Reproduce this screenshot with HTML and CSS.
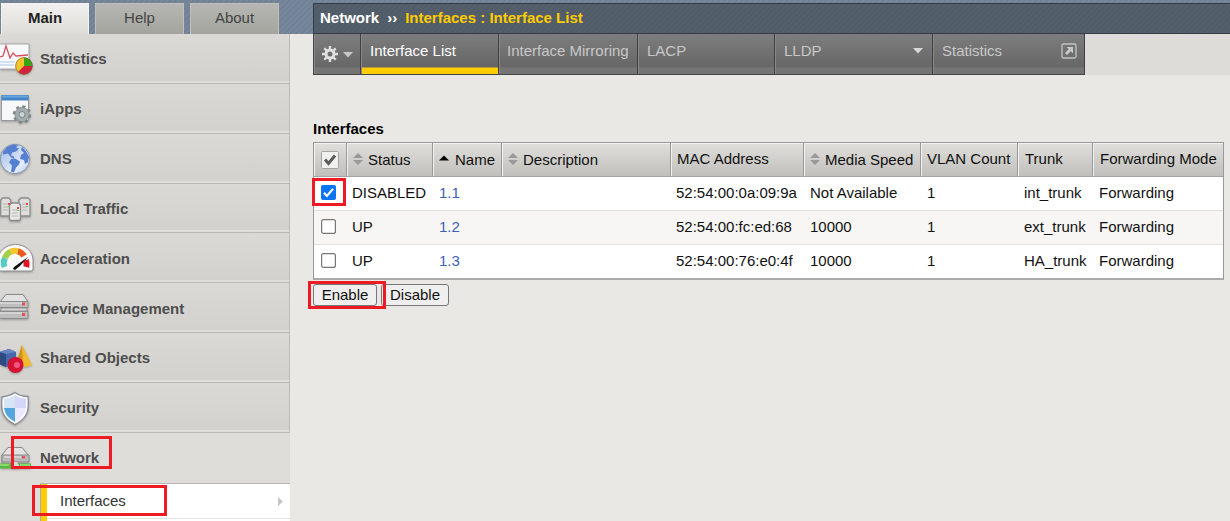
FILE: index.html
```html
<!DOCTYPE html>
<html lang="en">
<head>
<meta charset="utf-8">
<title>Interface List</title>
<link rel="stylesheet" href="styles.css">
</head>
<body>
<div class="app">
  <aside class="side">
    <nav class="tabs"><a class="tab on">Main</a><a class="tab">Help</a><a class="tab">About</a></nav>
    <ul class="menu">
      <li class="item">
        <svg class="icon" viewBox="0 0 34 36"><path d="M-2 3h31v25H-2z" fill="#f8f9fb" stroke="#a8a8a8"/><path d="M0 16l3-1 3-10 4 12 3-5 3 3 12-1" fill="none" stroke="#d5505c" stroke-width="1.3"/><path d="M0 21h15M0 24h14" stroke="#c5d9ec" stroke-width="1.5"/><circle cx="24" cy="25" r="8.5" fill="#d2233c"/><path d="M24 25v-8.5a8.500 8.500 0 0 1 8.500 8.500z" fill="#37a616"/><path d="M24 25v-8.500a8.500 8.500 0 0 0-6 14.500z" fill="#f2c62b"/><circle cx="24" cy="25" r="8.300" fill="none" stroke="#7a5a28" stroke-opacity=".5"/></svg>
        <span>Statistics</span></li>
      <li class="item">
        <svg class="icon" viewBox="0 0 34 36"><path d="M1.500 4.500h27v25h-27z" fill="#f8f8fa" stroke="#969a9e"/><path d="M1.500 4h27v5.500h-27z" fill="#4486c8"/><path d="M2 4.500h26v2H2z" fill="#6aa6dc"/><circle cx="22" cy="23.500" r="7.700" fill="none" stroke="#7c8688" stroke-width="3" stroke-dasharray="3 3.050"/><circle cx="22" cy="23.500" r="7.200" fill="#a3adaf" stroke="#7c8688" stroke-width=".7"/><circle cx="22" cy="23.500" r="3" fill="#cfd3d3" stroke="#7c8688"/></svg>
        <span>iApps</span></li>
      <li class="item">
        <svg class="icon" viewBox="0 0 34 36"><defs><linearGradient id="sea" x2="1" y2="1"><stop stop-color="#9bb9e8"/><stop offset=".7" stop-color="#e6edfb"/><stop offset="1" stop-color="#a4c0ee"/></linearGradient></defs><circle cx="15" cy="18" r="14.700" fill="url(#sea)" stroke="#8793a8"/><path d="M3 11l4-5 6-2.500 5 1-2 2 3 1-3 3-4 1-1 3 3 1v2l-3-1-3-4-5 1zM11 18l4-.5 5 3-1 3-3 3-2 5-3-1 1-6-3-3zM22 6l4 4 3 6-1 5-3 2-1-4-4-1 1-4 3-2-3-3z" fill="#557fd0"/></svg>
        <span>DNS</span></li>
      <li class="item">
        <svg class="icon low" viewBox="0 0 34 36"><g fill="#dededd" stroke="#8c8c8a" stroke-width="1.300"><path d="M.7 8l2-2h6l2 2v16H.7zM19 8l2-2h7l2 2v16H19z"/><path d="M9.500 13l2-2h7l2 2v14l-1 1.500h-9l-1-1.500z" fill="#e8e8e7"/></g><path d="M3 12h5m-5 3h5m-5 3h5M22 12h5m-5 3h5m-5 3h5m-15 0h6m-6 3h6m-6 3h6" stroke="#b4b4b3"/><path d="M8 11h2v2H8zM26 11h2v2h-2zM17 15h2v2h-2z" fill="#e94355"/><path d="M8 14h2v1H8zM26 14h2v1h-2zM17 18h2v1h-2z" fill="#72c95e"/></svg>
        <span>Local Traffic</span></li>
      <li class="item">
        <svg class="icon" viewBox="0 0 34 36"><path d="M-2 30V19a17.500 15.500 0 0 1 35 0v9q0 2-2 2z" fill="#fafafa" stroke="#8f8f8f"/><g fill="none" stroke-width="6"><path d="M4.500 26a11 11 0 0 1 .6-9" stroke="#53cdc5"/><path d="M5 17q2-5 6-6.500" stroke="#a4cf48"/><path d="M10.500 11q4-2 8-.5" stroke="#f2c62d"/><path d="M18 10.500q4 1 6 4.500" stroke="#e85b21"/><path d="M26 19q1 4 .3 7" stroke="#df1526"/></g><path d="M14 26l14-10-8 9-5 4-2-1z" fill="#111"/></svg>
        <span>Acceleration</span></li>
      <li class="item">
        <svg class="icon high" viewBox="0 0 34 36"><g stroke="#8b8b8b"><path d="M0 13l6-7.500h17l5 7.500z" fill="#e2e2e2"/><path d="M-2 12.500h30v6H-2zM-2 22.500h30v7H-2z" fill="#bebebe"/><path d="M0 22l2-3h24l2 3z" fill="#d8d8d8"/></g><path d="M0 14h22M0 24h22" stroke="#e7e7e7"/><path d="M22 13.500h3v3h-3zM22 24h3v3h-3z" fill="#ec4c5c"/></svg>
        <span>Device Management</span></li>
      <li class="item">
        <svg class="icon lowest" viewBox="0 0 34 36"><path d="M-1 9l10-3 7 3v13l-10 2-7-3z" fill="#4668ad"/><path d="M-1 9l10-3 7 3-10 2z" fill="#6685c2"/><path d="M-1 9l7 2v13l-7-3z" fill="#304b82"/><path d="M22 2l10 20-6 2-10-2z" fill="#f2ba2c"/><path d="M22 2l-6 20 7 1z" fill="#cd9220"/><circle cx="15.500" cy="22" r="8" fill="#d31234"/><circle cx="17" cy="22" r="3" fill="#f15582"/></svg>
        <span>Shared Objects</span></li>
      <li class="item">
        <svg class="icon low" viewBox="0 0 34 36"><path d="M15 1.500q5 4 13 4c1 12 1 21-13 28C1 27 1 18 2 6q8-1 13-4.500z" fill="#fff" stroke="#868b98" stroke-width="1.300"/><path d="M15 4q5 3.500 11 3.500V17H15z" fill="#d4d6fa"/><path d="M15 4Q10 7.500 4 7.500V17h11z" fill="#d5e5f5"/><path d="M4 17h11v14Q5 26 4 17z" fill="#55a6dc"/><path d="M26 17H15v14q10-5 11-14z" fill="#edeaff"/></svg>
        <span>Security</span></li>
      <li class="item open">
        <svg class="icon lower" viewBox="0 0 34 36"><path d="M2 13l6-7.500h14l6 7.500v8H2z" fill="#e2e2e2" stroke="#8b8b8b"/><path d="M2 13h27v7H2z" fill="#b9b9b9" stroke="#8b8b8b"/><path d="M4 15h17" stroke="#e9e9e9"/><path d="M22 14h3v2.500h-3z" fill="#ec4c5c"/><path d="M-1 21.500h32v5H-1z" fill="#54b841"/><path d="M0 23h9m11 0h10" stroke="#99e77d" stroke-width="1.500"/><path d="M11 23l2-3h4l2 3v4h-8z" fill="#dadada"/></svg>
        <span>Network</span></li>
    </ul>
    <div class="sub"><span>Interfaces</span><svg class="arrow" viewBox="0 0 5 9"><path d="M0 0l5 4.500L0 9z" fill="#c6c6c6"/></svg></div>
  </aside>
  <main class="main">
    <h1 class="crumb"><span>Network</span><span class="sep">››</span><span class="here">Interfaces : Interface List</span></h1>
    <div class="bar">
      <nav class="tools">
        <a class="tool gear"><svg width="16" height="16" viewBox="0 0 16 16"><circle cx="8" cy="8" r="4" fill="none" stroke="#e0e0e0" stroke-width="3"/><path d="M8 0v3m0 10v3M0 8h3m10 0h3M2.300 2.300l2.200 2.200m7 7l2.200 2.200M13.700 2.300l-2.200 2.200m-7 7l-2.200 2.200" stroke="#e0e0e0" stroke-width="2.400"/></svg><svg width="10" height="6" viewBox="0 0 10 6"><path d="M0 0h10L5 5.500z" fill="#c8c8c8"/></svg></a>
        <a class="tool list on">Interface List</a>
        <a class="tool mirroring">Interface Mirroring</a>
        <a class="tool lacp">LACP</a>
        <a class="tool lldp">LLDP<svg width="10" height="6" viewBox="0 0 10 6"><path d="M0 0h10L5 5.500z" fill="#d8d8d8"/></svg></a>
        <a class="tool stats">Statistics<svg width="16" height="16" viewBox="0 0 16 16"><rect x="1" y="1" width="14" height="14" rx="1.500" fill="none" stroke="#c4c4c4" stroke-width="1.300"/><path d="M5.500 4H12v6.500L9.800 8.300 6 12 4 10l3.700-3.800z" fill="#c8c8c8"/></svg></a>
      </nav>
    </div>
    <section class="content">
      <h2 class="title">Interfaces</h2>
      <table class="grid">
        <colgroup><col class="c1"><col class="c2"><col class="c3"><col class="c4"><col class="c5"><col class="c6"><col class="c7"><col class="c8"><col class="c9"></colgroup>
        <thead><tr>
          <th class="pick"><svg class="all" viewBox="0 0 18 18"><rect x=".5" y=".5" width="17" height="17" rx="1" fill="#f1f1f0" stroke="#a4a4a2"/><path d="M4 8.500l3.500 4L14 4.500" fill="none" stroke="#5c5c5c" stroke-width="3"/></svg></th>
          <th class="sort"><svg viewBox="0 0 10 12"><path d="M0 5l5-5 5 5zM0 7h10l-5 5z" fill="#999"/></svg>Status</th>
          <th class="sort"><svg viewBox="0 0 10 12"><path d="M0 7.500l5-5 5 5z" fill="#000"/></svg>Name</th>
          <th class="sort"><svg viewBox="0 0 10 12"><path d="M0 5l5-5 5 5zM0 7h10l-5 5z" fill="#999"/></svg>Description</th>
          <th>MAC Address</th>
          <th class="sort"><svg viewBox="0 0 10 12"><path d="M0 5l5-5 5 5zM0 7h10l-5 5z" fill="#999"/></svg>Media Speed</th>
          <th>VLAN Count</th><th class="far">Trunk</th><th class="far">Forwarding Mode</th>
        </tr></thead>
        <tbody>
          <tr><td class="pick"><svg class="box" viewBox="0 0 15 15"><rect width="15" height="15" rx="2" fill="#0b75f5"/><path d="M3 7.700l3 3.200 6-7" fill="none" stroke="#fff" stroke-width="2.200"/></svg><i class="mark mark-check"></i></td><td>DISABLED</td><td><a>1.1</a></td><td></td><td>52:54:00:0a:09:9a</td><td>Not Available</td><td>1</td><td>int_trunk</td><td>Forwarding</td></tr>
          <tr><td class="pick"><svg class="box" viewBox="0 0 15 15"><rect x=".6" y=".6" width="13.800" height="13.800" rx="2" fill="#fff" stroke="#767676" stroke-width="1.200"/></svg></td><td>UP</td><td><a>1.2</a></td><td></td><td>52:54:00:fc:ed:68</td><td>10000</td><td>1</td><td>ext_trunk</td><td>Forwarding</td></tr>
          <tr><td class="pick"><svg class="box" viewBox="0 0 15 15"><rect x=".6" y=".6" width="13.800" height="13.800" rx="2" fill="#fff" stroke="#767676" stroke-width="1.200"/></svg></td><td>UP</td><td><a>1.3</a></td><td></td><td>52:54:00:76:e0:4f</td><td>10000</td><td>1</td><td>HA_trunk</td><td>Forwarding</td></tr>
        </tbody>
      </table>
      <div class="actions"><button class="btn enable">Enable</button><button class="btn disable">Disable</button></div>
    </section>
  </main>
  <i class="mark mark-network"></i><i class="mark mark-interfaces"></i><i class="mark mark-enable"></i>
</div>
</body>
</html>
```
FILE: styles.css
```css
* { box-sizing: border-box; }
body { margin: 0; font: 15px/18px "Liberation Sans", Arial, sans-serif; color: #111; }
.app { position: relative; display: flex; width: 1230px; height: 521px; overflow: hidden;
  background: linear-gradient(#e9e8e4, #e9e8e4) 0 34px no-repeat, repeating-linear-gradient(135deg, #718196 0 2px, #77879b 2px 4px); }
.side { width: 290px; flex: none; height: 521px; display: flex; flex-direction: column; }
.tabs { display: flex; gap: 6px; height: 34px; padding: 3px 0 0 1px; flex: none; }
.tab { width: 89px; height: 31px; padding-top: 5px; text-align: center; color: #444;
  background: linear-gradient(#b6b7b2, #a3a49e); border: 1px solid #bfc0bb; border-bottom: 0; }
.tab.on { width: 88px; color: #222; font-weight: bold; background: linear-gradient(#f1f0ee, #dddcd8); border-color: #f3f2f0; }
.menu { list-style: none; margin: 0; padding: 0; flex: none; }
.item { height: 49.850px; padding-top: 2px; display: flex; align-items: center; gap: 6px; font-weight: bold; color: #4e4e4e;
  background: linear-gradient(#dad9d5, #d2d1cd); border-bottom: 1px solid #b9b9b6; border-right: 1px solid #bbbbb8;
  box-shadow: inset 0 -2px #dfdeda; }
.item.open { background: #dedddA; border-color: transparent; box-shadow: none; }
.icon { width: 34px; height: 36px; flex: none; filter: drop-shadow(0 1px 1px #0004); }
.low { margin: 1px 0 -1px; }
.lower { margin: 2px 0 -2px; }
.lowest { margin: 3px 0 -3px; }
.high { margin: -2px 0 2px; }
.sub { flex: 1; background: linear-gradient(#e4e4e2, #e4e4e2) 6px 34px / 243px 1px no-repeat, #fff;
  margin-left: 40px; border-top: 1px solid #b5b5b5; border-left: 1px solid #aaa; padding: 8px 7px 0 0;
  display: flex; justify-content: space-between; align-items: flex-start; box-shadow: -40px 0 #dedddA, inset 6px 0 #fc0; color: #333; }
.sub span { padding-left: 19px; }
.arrow { width: 5px; height: 9px; margin-top: 5px; }
.main { flex: 1; padding: 3px 0 0 23px; min-width: 0; }
.crumb { height: 31px; margin: 0; padding: 5px 0 0 6px; display: flex; font-size: 15px; line-height: 18px; color: #fff;
  border: 1px solid #353b46; border-right: 0; background: repeating-linear-gradient(135deg, #505c69 0 2px, #555f69 2px 4px); }
.sep { margin: 0 8px; }
.here { color: #fc0; }
.bar { height: 41px; background: #dddcd8; }
.tools { display: flex; width: 772px; height: 41px; border-left: 1px solid #444; }
.tool { height: 41px; padding: 8px 8px 0 9px; display: flex; justify-content: space-between; color: #c8c8c8; white-space: nowrap;
  background: linear-gradient(#7d7d7d, #676767 33px, #757575 34px); border-right: 1px solid #404040; border-bottom: 1px solid #444; box-shadow: inset 1px 0 #888; }
.tool svg { margin: 6px 1px 0 0; }
.gear { width: 47px; padding-left: 8px; }
.gear svg { margin: 4px 0 0; }
.gear svg + svg { margin: 10px -1px 0 0; }
.list { width: 138px; }
.mirroring { width: 139px; padding-left: 8px; }
.lacp { width: 137px; }
.lldp { width: 158px; }
.stats { width: 152px; }
.stats svg { margin: 1px -1px 0 0; }
.tool.on { color: #fff; background: linear-gradient(#7d7d7d, #656565 33px, #fc0 34px); }
.content { padding-top: 45px; background: #e9e8e4; height: 446px; }
.title { margin: 0 0 4px; font-size: 15px; line-height: 18px; color: #000; }
.grid { width: 911px; table-layout: fixed; border-collapse: separate; border-spacing: 0; border: 1px solid #999; border-bottom: 2px solid #aaa; }
.c1 { width: 33px; } .c2 { width: 86px; } .c3 { width: 69px; } .c4 { width: 169px; } .c5 { width: 133px; }
.c6 { width: 117px; } .c7 { width: 97px; } .c8 { width: 75px; } .c9 { width: 130px; }
.grid th { height: 34px; padding: 0 0 2px 6px; text-align: left; font-weight: normal; white-space: nowrap;
  background: linear-gradient(#e0dfdc, #c0bfbb); border-right: 1px solid #999; border-bottom: 1px solid #a5a5a5; box-shadow: inset 1px 1px #f2f2f0; }
.grid th.far { padding-left: 7px; }
.grid th:last-child, .grid td:last-child { border-right: 0; }
.grid th.sort { padding: 0 0 0 6px; }
.sort svg { width: 10px; height: 12px; margin-right: 5px; }
.grid th:nth-child(3) svg { margin-right: 6px; }
.grid td { height: 34px; padding: 0 0 1px 5px; white-space: nowrap; background: #fff; border-bottom: 1px solid #e1e1df; }
.grid td:nth-child(n+6) { padding-left: 6px; }
.grid tr:nth-child(2) td { background: #f7f6f4; }
.grid tbody tr:last-child td { height: 33px; border-bottom: 0; }
.grid td a { color: #3b62b8; padding-left: 1px; }
.grid .pick { position: relative; padding: 0 0 0 7px; }
.pick svg { display: block; width: 18px; height: 18px; }
.pick .box { width: 15px; height: 15px; margin-top: -3px; }
.actions { display: flex; gap: 4px; padding-top: 4px; }
.btn { height: 22px; padding: 0; font: 15px/18px "Liberation Sans", Arial, sans-serif; color: #111; background: #efefef; border: 1px solid #777; border-radius: 3px; }
.enable { width: 64px; }
.disable { width: 68px; }
.mark { position: absolute; border: 3px solid #ed1c24; }
.mark-check { left: -2px; top: 1px; width: 34px; height: 28px; }
.mark-network { left: 11px; top: 436px; width: 101px; height: 33px; }
.mark-interfaces { left: 32px; top: 485px; width: 135px; height: 31px; }
.mark-enable { left: 308px; top: 281px; width: 78px; height: 28px; }
```
